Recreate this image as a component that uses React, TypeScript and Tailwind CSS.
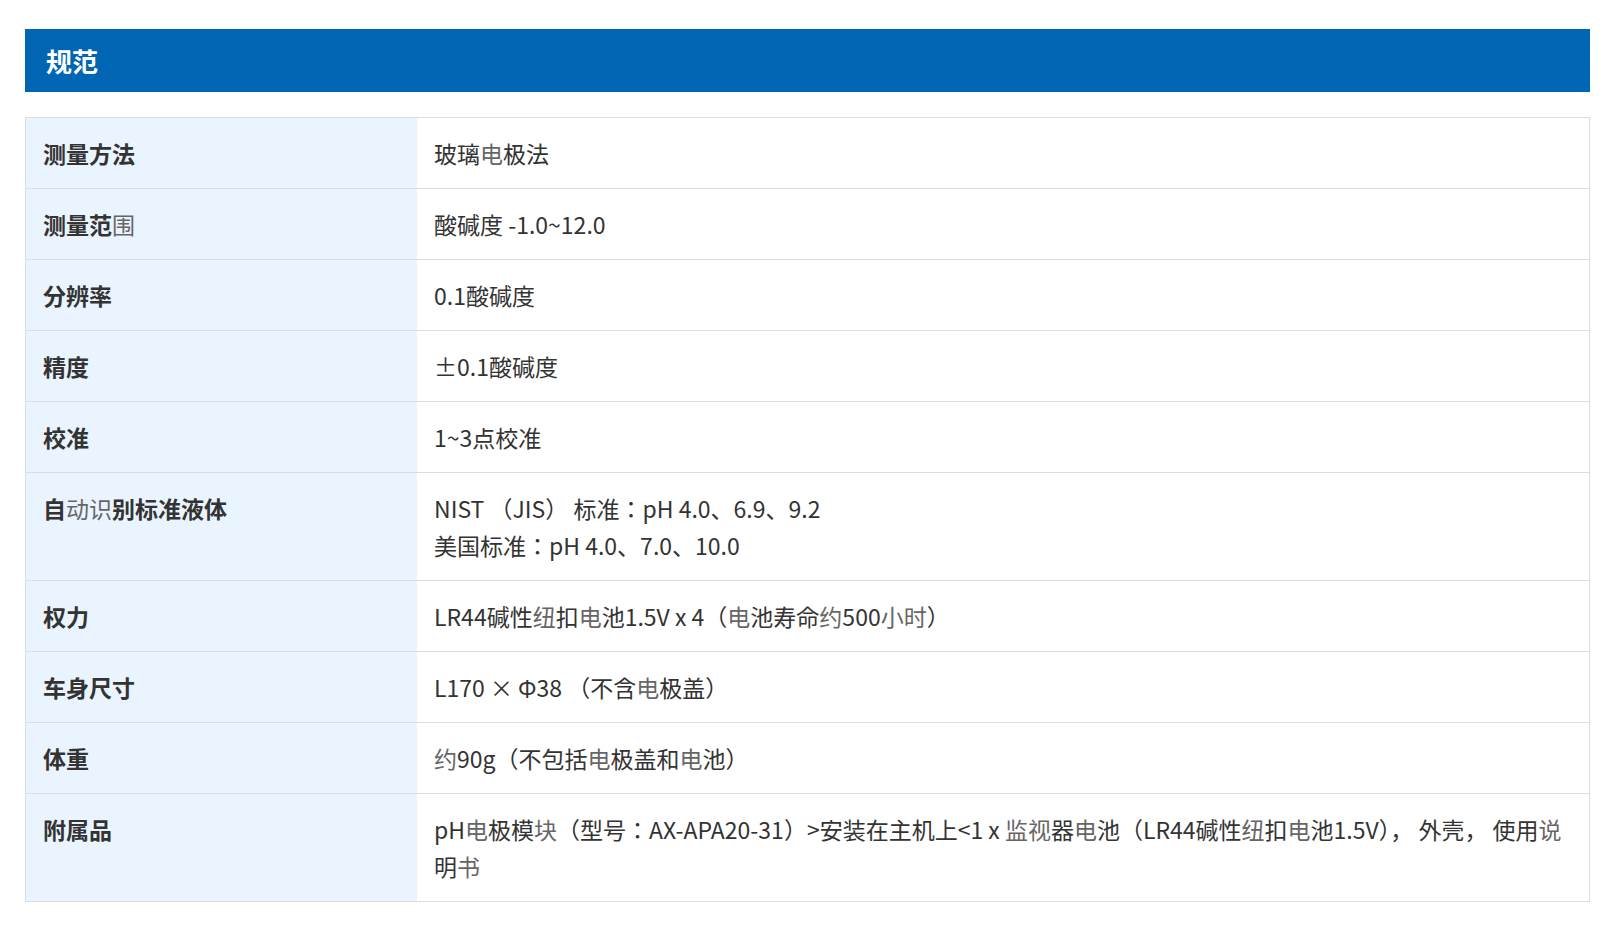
import React from 'react'

const light = new Set(['电', '纽', '约', '说', '书', '监', '视', '块', '小', '时', '围', '动', '识'])

// some glyphs in the source come from a thinner fallback face
function Soft({ text }: { text: string }) {
  return (
    <>
      {Array.from(text).map((ch, i) =>
        light.has(ch) ? (
          <span key={i} className="font-normal text-[#666]">
            {ch}
          </span>
        ) : (
          <React.Fragment key={i}>{ch}</React.Fragment>
        ),
      )}
    </>
  )
}

const specs: { label: string; lines: string[] }[] = [
  { label: '测量方法', lines: ['玻璃电极法'] },
  { label: '测量范围', lines: ['酸碱度 -1.0~12.0'] },
  { label: '分辨率', lines: ['0.1酸碱度'] },
  { label: '精度', lines: ['±0.1酸碱度'] },
  { label: '校准', lines: ['1~3点校准'] },
  { label: '自动识别标准液体', lines: ['NIST （JIS） 标准：pH 4.0、6.9、9.2', '美国标准：pH 4.0、7.0、10.0'] },
  { label: '权力', lines: ['LR44碱性纽扣电池1.5V x 4（电池寿命约500小时）'] },
  { label: '车身尺寸', lines: ['L170 × Φ38 （不含电极盖）'] },
  { label: '体重', lines: ['约90g（不包括电极盖和电池）'] },
  {
    label: '附属品',
    lines: ['pH电极模块（型号：AX-APA20-31）>安装在主机上<1 x 监视器电池（LR44碱性纽扣电池1.5V）， 外壳， 使用说', '明书'],
  },
]

export default function App() {
  return (
    <div
      className="min-h-screen bg-white pl-[25px] pr-[32px] pt-[29px] text-[#333]"
      style={{ fontFamily: '"Noto Sans CJK JP", "Noto Sans CJK SC", "Noto Sans", sans-serif' }}
    >
      {/* Section header */}
      <div className="flex h-[63px] items-center bg-[#0066b3] pl-[21px]">
        <h2 className="text-[26px] font-bold text-white">规范</h2>
      </div>

      {/* Spec table */}
      <div className="mt-[25px] border border-b-0 border-[#dddddd]">
        {specs.map((row) => (
          <div key={row.label} className="grid grid-cols-[391px_1fr] border-b border-[#dddddd]">
            <div className="bg-[#eaf4fe] py-[16.5px] pl-[17px] text-[23px] leading-[37px] font-bold">
              <Soft text={row.label} />
            </div>
            <div className="py-[16.5px] pl-[17px] pr-[17px] text-[23px] leading-[37px] whitespace-nowrap">
              {row.lines.map((line, i) => (
                <div key={i}>
                  <Soft text={line} />
                </div>
              ))}
            </div>
          </div>
        ))}
      </div>
    </div>
  )
}
